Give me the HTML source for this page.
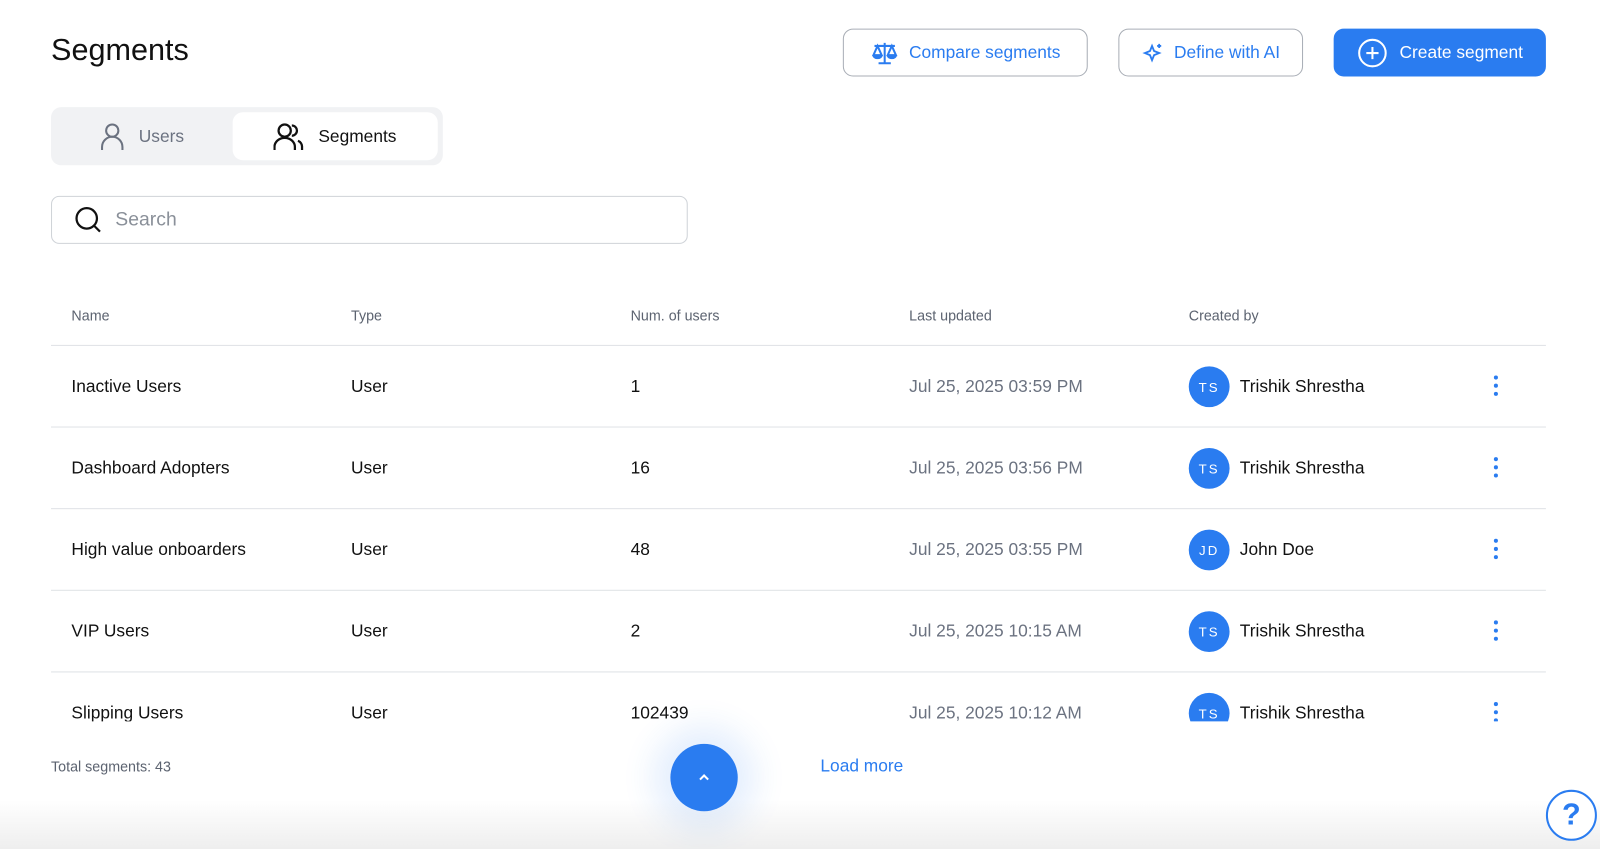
<!DOCTYPE html>
<html><head><meta charset="utf-8"><style>
*{box-sizing:border-box;margin:0;padding:0}
body{width:1600px;height:849px;overflow:hidden;background:#fff;font-family:"Liberation Sans",sans-serif;color:#111;position:relative}
#w{position:absolute;left:0;top:0;width:1568px;height:832px;transform:scale(1.0204);transform-origin:0 0}
.abs{position:absolute}
h1{position:absolute;left:50px;top:33px;font-size:30px;font-weight:400;color:#111}
.btn{position:absolute;top:28px;height:47px;border:1.5px solid #a9aeb6;border-radius:10px;color:#2a7cf0;font-size:17px;display:flex;align-items:center;justify-content:center;gap:10px;background:#fff}
.tabs{position:absolute;left:50px;top:105px;width:384px;height:57px;background:#f1f2f4;border-radius:10px}
.tab{position:absolute;top:5px;height:47px;display:flex;align-items:center;gap:14px;font-size:17px}
.search{position:absolute;left:50px;top:192px;width:624px;height:47px;border:1.5px solid #cfd3d8;border-radius:8px;display:flex;align-items:center;padding-left:22px;gap:12px;font-size:19px;color:#8a9099}
.th{position:absolute;top:301px;font-size:14px;color:#5c6370}
.line{position:absolute;left:50px;width:1465px;height:1px;background:#dfe2e6}
.cell{position:absolute;font-size:17px;color:#111}
.date{color:#6b7280}
.av{position:absolute;left:1165px;width:40px;height:40px;border-radius:50%;background:#2a7cf0;color:#fff;font-size:13px;letter-spacing:2px;display:flex;align-items:center;justify-content:center}
.dots{position:absolute;left:1463px;width:6px}
.dots i{display:block;width:4px;height:4px;border-radius:50%;background:#2a7cf0;margin:0 auto 4px}
</style></head><body>
<div class="abs" style="left:0;top:800px;width:1600px;height:49px;background:linear-gradient(#fff,#eee)"></div>
<div id="w">
<h1>Segments</h1>
<div class="btn" style="left:826px;width:240px">
<svg width="28" height="24" viewBox="0 0 28 24" fill="none" stroke="#2a7cf0" stroke-width="2"><path d="M14 2v20M8 22h12M4 5h20M7 5l-4 9h8zM21 5l-4 9h8z"/><path d="M3 14a4 3 0 0 0 8 0M17 14a4 3 0 0 0 8 0" fill="#2a7cf0"/></svg>Compare segments</div>
<div class="btn" style="left:1096px;width:181px">
<svg width="22" height="22" viewBox="0 0 22 22" fill="none" stroke="#2a7cf0" stroke-width="1.8"><path d="M10 4l2 5 5 2-5 2-2 5-2-5-5-2 5-2z"/><path d="M17 2v4M15 4h4"/></svg>Define with AI</div>
<div class="btn" style="left:1307px;width:208px;background:#2a7cf0;border-color:#2a7cf0;color:#fff;gap:12px">
<svg width="30" height="30" viewBox="0 0 30 30" fill="none" stroke="#fff" stroke-width="2"><circle cx="15" cy="15" r="13"/><path d="M15 9v12M9 15h12"/></svg>Create segment</div>
<div class="tabs">
<div class="tab" style="left:48px;color:#6b7280"><svg width="24" height="28" viewBox="0 0 24 28" fill="none" stroke="#6b7280" stroke-width="2"><circle cx="12" cy="8" r="6"/><path d="M2 27v-3a8 8 0 0 1 20 0v3"/></svg>Users</div>
<div class="tab" style="left:178px;width:201px;background:#fff;border-radius:10px;padding-left:40px"><svg width="30" height="28" viewBox="0 0 30 28" fill="none" stroke="#111" stroke-width="2.2"><circle cx="11" cy="8" r="6"/><path d="M1 27v-3a9 8 0 0 1 20 0v3M18 3a5 5 0 0 1 0 10M24 18a6 6 0 0 1 4 6v3"/></svg>Segments</div>
</div>
<div class="search"><svg width="28" height="28" viewBox="0 0 28 28" fill="none" stroke="#111" stroke-width="2.2"><circle cx="12" cy="12" r="10"/><path d="M19 19l6 6"/></svg>Search</div>
<div class="th" style="left:70px">Name</div><div class="th" style="left:344px">Type</div><div class="th" style="left:618px">Num. of users</div><div class="th" style="left:891px">Last updated</div><div class="th" style="left:1165px">Created by</div>
<div class="line" style="top:338px"></div>
<div class="line" style="top:418px"></div>
<div class="line" style="top:498px"></div>
<div class="line" style="top:578px"></div>
<div class="line" style="top:658px"></div>

<div class="cell" style="left:70px;top:369px">Inactive Users</div><div class="cell" style="left:344px;top:369px">User</div><div class="cell" style="left:618px;top:369px">1</div><div class="cell date" style="left:891px;top:369px">Jul 25, 2025 03:59 PM</div><div class="av" style="top:359px">TS</div><div class="cell" style="left:1215px;top:369px">Trishik Shrestha</div><div class="dots" style="top:368px"><i></i><i></i><i></i></div>

<div class="cell" style="left:70px;top:449px">Dashboard Adopters</div><div class="cell" style="left:344px;top:449px">User</div><div class="cell" style="left:618px;top:449px">16</div><div class="cell date" style="left:891px;top:449px">Jul 25, 2025 03:56 PM</div><div class="av" style="top:439px">TS</div><div class="cell" style="left:1215px;top:449px">Trishik Shrestha</div><div class="dots" style="top:448px"><i></i><i></i><i></i></div>

<div class="cell" style="left:70px;top:529px">High value onboarders</div><div class="cell" style="left:344px;top:529px">User</div><div class="cell" style="left:618px;top:529px">48</div><div class="cell date" style="left:891px;top:529px">Jul 25, 2025 03:55 PM</div><div class="av" style="top:519px">JD</div><div class="cell" style="left:1215px;top:529px">John Doe</div><div class="dots" style="top:528px"><i></i><i></i><i></i></div>

<div class="cell" style="left:70px;top:609px">VIP Users</div><div class="cell" style="left:344px;top:609px">User</div><div class="cell" style="left:618px;top:609px">2</div><div class="cell date" style="left:891px;top:609px">Jul 25, 2025 10:15 AM</div><div class="av" style="top:599px">TS</div><div class="cell" style="left:1215px;top:609px">Trishik Shrestha</div><div class="dots" style="top:608px"><i></i><i></i><i></i></div>

<div class="abs" style="left:0;top:659px;width:1568px;height:48px;overflow:hidden">
<div class="cell" style="left:70px;top:30px">Slipping Users</div><div class="cell" style="left:344px;top:30px">User</div><div class="cell" style="left:618px;top:30px">102439</div><div class="cell date" style="left:891px;top:30px">Jul 25, 2025 10:12 AM</div><div class="av" style="top:20px">TS</div><div class="cell" style="left:1215px;top:30px">Trishik Shrestha</div><div class="dots" style="top:29px"><i></i><i></i><i></i></div>
</div>
<div class="abs" style="left:50px;top:743px;font-size:14px;color:#5c6370">Total segments: 43</div>
<div class="abs" style="left:657px;top:729px;width:66px;height:66px;border-radius:50%;background:#2a7cf0;box-shadow:0 0 30px 18px rgba(42,124,240,0.12);color:#fff;display:flex;align-items:center;justify-content:center"><svg width="14" height="10" viewBox="0 0 14 10" fill="none" stroke="#fff" stroke-width="2"><path d="M3 7l4-4 4 4"/></svg></div>
<div class="abs" style="left:804px;top:741px;font-size:17px;color:#2a7cf0">Load more</div>
<div class="abs" style="left:1515px;top:774px;width:50px;height:50px;border-radius:50%;border:2px solid #2a7cf0;background:#fff;color:#2a7cf0;font-size:30px;font-weight:700;display:flex;align-items:center;justify-content:center">?</div>
</div>
</body></html>
